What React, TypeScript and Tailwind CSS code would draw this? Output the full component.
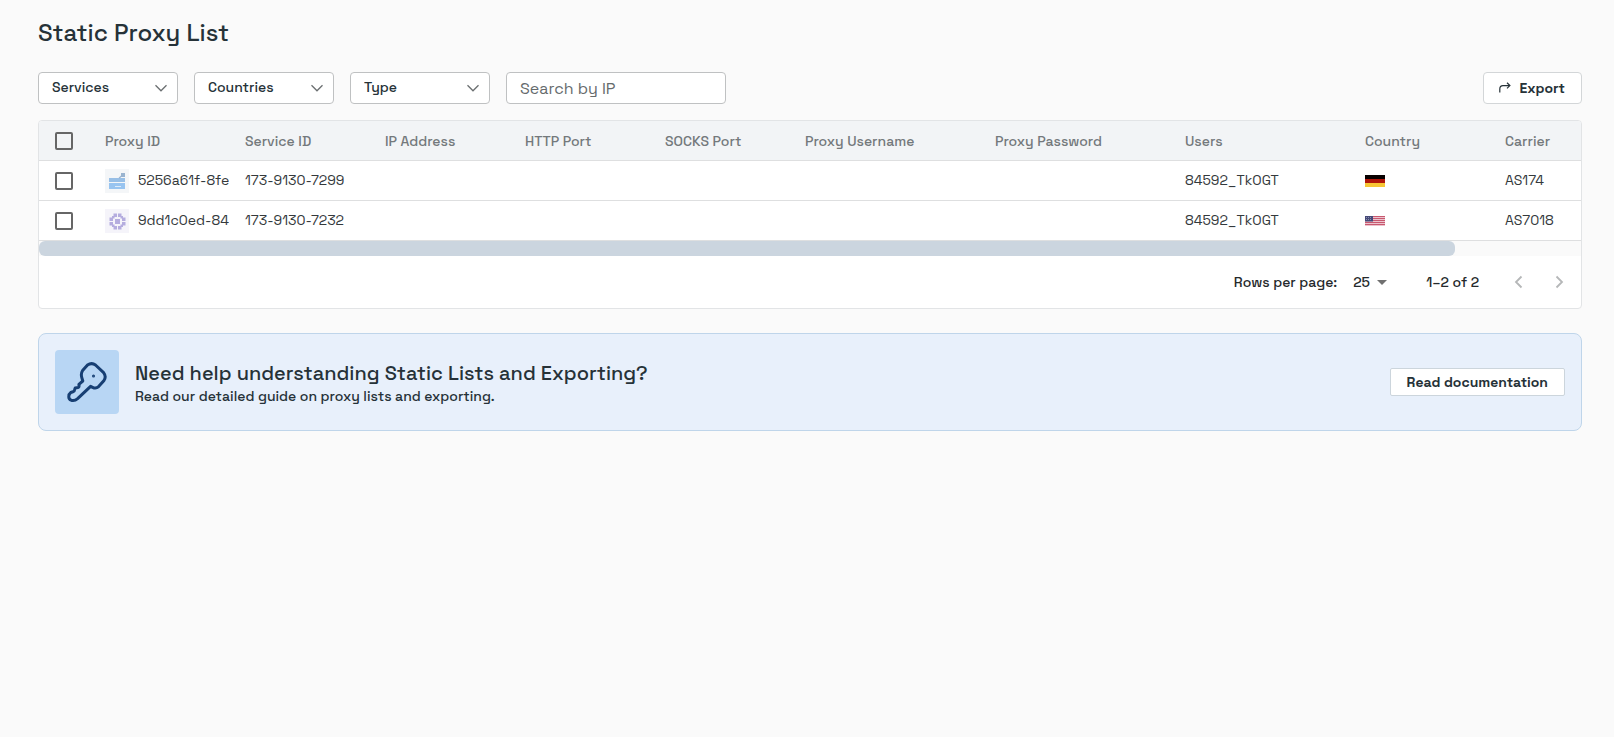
import React, { useState } from 'react';

interface Proxy {
  id: string;
  serviceId: string;
  user: string;
  country: 'DE' | 'US';
  carrier: string;
  kind: 'server' | 'chip';
}

const proxies: Proxy[] = [
  { id: '5256a61f-8fe3', serviceId: '173-9130-7299', user: '84592_TkOGT', country: 'DE', carrier: 'AS174', kind: 'server' },
  { id: '9dd1c0ed-848', serviceId: '173-9130-7232', user: '84592_TkOGT', country: 'US', carrier: 'AS7018', kind: 'chip' },
];

const columns = [
  { label: 'Proxy ID', width: 'w-[140px]' },
  { label: 'Service ID', width: 'w-[140px]' },
  { label: 'IP Address', width: 'w-[140px]' },
  { label: 'HTTP Port', width: 'w-[140px]' },
  { label: 'SOCKS Port', width: 'w-[140px]' },
  { label: 'Proxy Username', width: 'w-[190px]' },
  { label: 'Proxy Password', width: 'w-[190px]' },
  { label: 'Users', width: 'w-[180px]' },
  { label: 'Country', width: 'w-[140px]' },
  { label: 'Carrier', width: '' },
];

const FilterSelect: React.FC<{ label: string }> = ({ label }) => (
  <div className="relative w-[140px]">
    <select
      aria-label={label}
      className="block h-8 w-full appearance-none rounded border border-[#bfc1c2] bg-white pb-[2px] pl-[13px] pr-8 text-sm font-medium text-[#263238]"
    >
      <option>{label}</option>
    </select>
    <svg className="pointer-events-none absolute right-[10px] top-[10px]" width="13" height="12" viewBox="0 0 13 12" fill="none" stroke="#6b6f71" strokeWidth="1.3">
      <path d="M.5 3.2 6 8.8 11.5 3.2" />
    </svg>
  </div>
);

const Checkbox: React.FC<{ label: string }> = ({ label }) => (
  <input
    type="checkbox"
    aria-label={label}
    className="block h-[18px] w-[18px] appearance-none rounded-xs border-2 border-[#666666] checked:bg-[#666666]"
  />
);

const ServerIcon = () => (
  <svg className="shrink-0" width="24" height="24" viewBox="0 0 24 24">
    <rect width="24" height="24" fill="#f4f6f8" />
    <rect x="4" y="9" width="16" height="4" fill="#98bfe6" />
    <rect x="16" y="4" width="4" height="4" fill="#9ab4d0" />
    <path d="M14 9.200 17.500 6" stroke="#9ab4d0" strokeWidth="1.200" />
    <rect x="4" y="14" width="16" height="6" fill="#98c4f0" />
    <path d="M10 17.500h6" stroke="#dcebfa" strokeWidth="1" />
  </svg>
);

const ChipIcon = () => (
  <svg className="shrink-0" width="24" height="24" viewBox="0 0 24 24">
    <rect width="24" height="24" fill="#f5f4fa" />
    <g fill="#b5addf">
      <rect x="10" y="10" width="5" height="5" />
      <rect x="8.500" y="4.500" width="3.500" height="3.500" />
      <rect x="13" y="4.500" width="3.500" height="3.500" />
      <rect x="8.500" y="17" width="3.500" height="3.500" />
      <rect x="13" y="17" width="3.500" height="3.500" />
      <rect x="4.500" y="8.500" width="3.500" height="3.500" />
      <rect x="4.500" y="13" width="3.500" height="3.500" />
      <rect x="17" y="8.500" width="3.500" height="3.500" />
      <rect x="17" y="13" width="3.500" height="3.500" />
      <rect x="7" y="7" width="2.500" height="2.500" />
      <rect x="15.500" y="7" width="2.500" height="2.500" />
      <rect x="7" y="15.500" width="2.500" height="2.500" />
      <rect x="15.500" y="15.500" width="2.500" height="2.500" />
    </g>
  </svg>
);

const Flag: React.FC<{ country: Proxy['country'] }> = ({ country }) =>
  country === 'DE' ? (
    <svg role="img" aria-label="Germany" className="block" width="20" height="12" viewBox="0 0 20 12">
      <rect width="20" height="4" fill="#080000" />
      <rect y="4" width="20" height="4" fill="#b01508" />
      <rect y="8" width="20" height="4" fill="#f7c634" />
    </svg>
  ) : (
    <svg role="img" aria-label="United States" className="block" width="20" height="10" viewBox="0 0 20 10">
      <rect width="20" height="10" fill="#ecc3cd" />
      <path d="M0 .5h20M0 2.500h20M0 4.500h20M0 6.500h20M0 8.500h20" stroke="#c8586f" strokeWidth="1" />
      <rect width="8" height="5.500" fill="#464a78" />
      <path d="M1 1.500h6M1 3.500h6" stroke="#a9aac6" strokeWidth=".7" strokeDasharray="1 1" />
    </svg>
  );

const KeyIcon = () => (
  <svg width="40" height="40" viewBox="0 0 40 40" fill="none" stroke="#173f73" strokeWidth="3" strokeLinejoin="round" strokeLinecap="round">
    <path d="M20.500 3Q24.700 .2 28.500 3L36.600 10.600Q39.600 14.500 37 18.400L31.600 24.600Q29 27 25.600 25.300L23.600 24.300 10.600 36.600Q7.600 39.200 4.200 38.200 1.600 37.200 1.800 34.500 1.800 32 3.800 30.500L6 29.800Q7.600 29.400 7.700 27.500L8.200 26 11 25.600Q12.300 25.200 12 23.600L11.900 22.300 15.800 19 14.800 15.600Q13.600 11.800 15.600 8.500Z" />
    <circle cx="26.500" cy="14" r=".6" strokeWidth="1.800" />
  </svg>
);

const App: React.FC = () => {
  const [scrollLeft, setScrollLeft] = useState(0);
  const [search, setSearch] = useState('');

  return (
    <div className="min-h-screen bg-[#fafafa] pb-8 pl-[38px] pr-8 pt-[17px] font-['Space_Grotesk','Inter',sans-serif] text-[#263238]">
      <h1 className="text-2xl font-medium">Static Proxy List</h1>

      <div className="mt-[23px] flex gap-4">
        <FilterSelect label="Services" />
        <FilterSelect label="Countries" />
        <FilterSelect label="Type" />
        <input
          type="text"
          aria-label="Search by IP"
          placeholder="Search by IP"
          value={search}
          onChange={(e) => setSearch(e.target.value)}
          className="h-8 w-[220px] rounded border border-[#bfc1c2] bg-white px-[13px] text-base placeholder-[#666b6d]"
        />
        <button className="ml-auto flex h-8 items-center gap-[9px] rounded border border-[#d3d6d8] bg-white pl-[15px] pr-4 text-sm font-semibold">
          <svg width="12" height="12" viewBox="0 0 12 12" fill="none" stroke="currentColor" strokeWidth="1.200">
            <path d="M.8 10.500V7Q.8 3.600 4 3.600H10.800M8 .8 10.900 3.600 8 6.400" />
          </svg>
          Export
        </button>
      </div>

      <div className="mt-4 overflow-hidden rounded border border-[#e2e4e6] bg-white">
        <div className="overflow-x-auto [scrollbar-width:none]" onScroll={(e) => setScrollLeft(e.currentTarget.scrollLeft)}>
          <table className="w-[1680px] table-fixed border-separate border-spacing-0 text-left text-sm">
            <thead className="bg-[#f2f4f6] text-[#74797c]">
              <tr className="h-10">
                <th className="w-[50px] border-b border-[#dedfe0] pl-4">
                  <Checkbox label="Select all proxies" />
                </th>
                {columns.map((column) => (
                  <th key={column.label} className={`${column.width} border-b border-[#dedfe0] px-4 font-medium`}>
                    {column.label}
                  </th>
                ))}
              </tr>
            </thead>
            <tbody className="text-[#34393c]">
              {proxies.map((proxy) => (
                <tr key={proxy.id} className="h-10 [&>td]:border-b [&>td]:border-[#dedfe0]">
                  <td className="pl-4">
                    <Checkbox label={`Select ${proxy.serviceId}`} />
                  </td>
                  <td className="pl-4">
                    <div className="flex items-center gap-[9px] overflow-hidden whitespace-nowrap">
                      {proxy.kind === 'server' ? <ServerIcon /> : <ChipIcon />}
                      <span className="pb-[2px]">{proxy.id}</span>
                    </div>
                  </td>
                  <td className="px-4 pb-[2px]">{proxy.serviceId}</td>
                  <td />
                  <td />
                  <td />
                  <td />
                  <td />
                  <td className="px-4 pb-[2px]">{proxy.user}</td>
                  <td className="px-4">
                    <Flag country={proxy.country} />
                  </td>
                  <td className="px-4 pb-[2px]">{proxy.carrier}</td>
                </tr>
              ))}
            </tbody>
          </table>
        </div>
        <div className="overflow-hidden bg-[#fafafa]">
          <div className="h-[15px] w-[91.8%] rounded-md bg-[#cbd5df]" style={{ transform: `translateX(${scrollLeft * 0.918}px)` }} />
        </div>
        <div className="flex h-[52px] items-center justify-end pr-[15px] text-sm font-medium text-[#25292b]">
          <label htmlFor="rows">Rows per page:</label>
          <div className="relative ml-4">
            <select id="rows" defaultValue="25" className="block w-9 appearance-none bg-transparent">
              <option>25</option>
              <option>50</option>
            </select>
            <svg className="pointer-events-none absolute right-[2px] top-2" width="10" height="5" viewBox="0 0 10 5" fill="#707070">
              <path d="M0 0h10L5 5z" />
            </svg>
          </div>
          <span className="ml-[37px]">1–2 of 2</span>
          <div className="ml-[33px] flex gap-[26px] text-[#b5b7b8]">
            <button aria-label="Previous page">
              <svg width="14" height="14" viewBox="0 0 14 14" fill="none" stroke="currentColor" strokeWidth="1.800">
                <path d="M9.500 1.500 4 7l5.500 5.500" />
              </svg>
            </button>
            <button aria-label="Next page">
              <svg width="14" height="14" viewBox="0 0 14 14" fill="none" stroke="currentColor" strokeWidth="1.800">
                <path d="M4.500 1.500 10 7l-5.500 5.500" />
              </svg>
            </button>
          </div>
        </div>
      </div>

      <section className="mt-6 flex items-center gap-4 rounded-lg border border-[#bfd5ea] bg-[#e8f0fb] p-4">
        <div className="flex h-16 w-16 items-center justify-center rounded bg-[#b8d6f4]">
          <KeyIcon />
        </div>
        <div className="pt-[3px]">
          <h2 className="text-xl leading-6 font-medium">Need help understanding Static Lists and Exporting?</h2>
          <p className="mt-px text-sm font-medium">Read our detailed guide on proxy lists and exporting.</p>
        </div>
        <a href="#docs" className="ml-auto flex h-7 items-center rounded-xs border border-[#ccd5dc] bg-white px-4 text-sm font-semibold">
          Read documentation
        </a>
      </section>
    </div>
  );
};

export default App;
